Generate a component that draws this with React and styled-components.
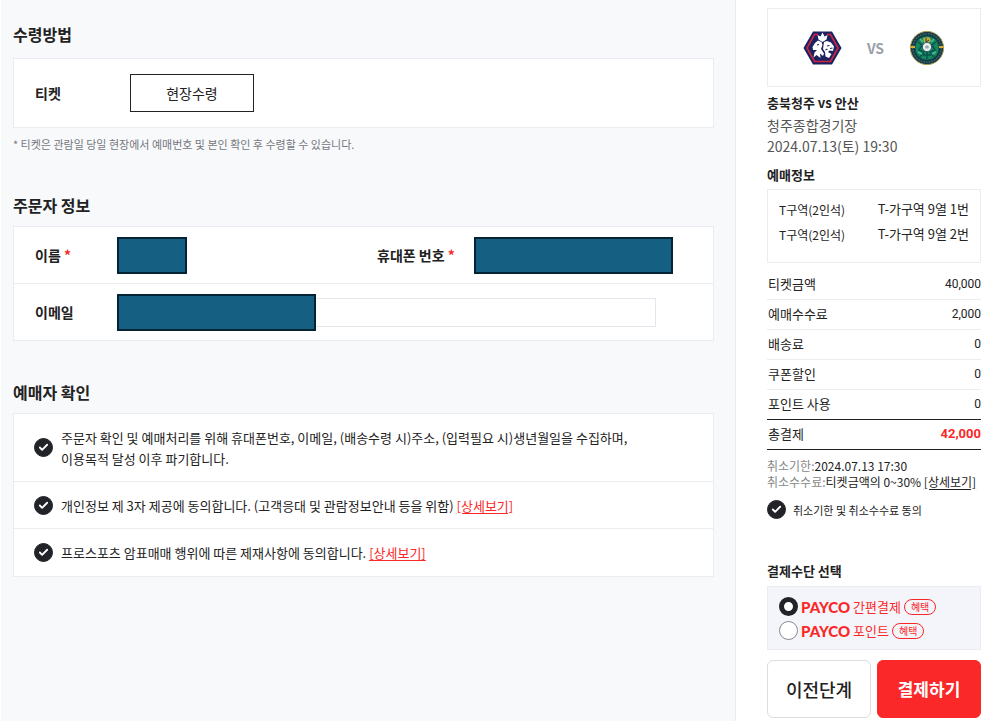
import React, {useState} from "react";
import styled, {createGlobalStyle} from "styled-components";
import {Check} from "lucide-react";

const GlobalStyle = createGlobalStyle`
    * {
        box-sizing: border-box;
    }
    body {
        margin: 0;
        background: #fff;
        color: #222;
        font-family: "Noto Sans CJK KR", "Noto Sans", sans-serif;
        font-size: 13px;
        line-height: 20px;
    }
    button, input {
        font-family: inherit;
    }
`

const Page = styled.div`
    display: flex;
    min-height: 100vh;
`

const Main = styled.main`
    flex: 1;
    min-width: 0;
    margin-left: 1px;
    padding: 24px 21px 0 12px;
    background: #f8f9fb;
`

const Section = styled.section`
    margin-bottom: 41px;
`

const Title = styled.h2`
    margin: 0 0 ${props => props.gap || 11}px;
    font-size: 16px;
    line-height: 20px;
    font-weight: 700;
`

const Card = styled.div`
    background: #fff;
    border: 1px solid #ebecf1;
`

const Row = styled.div`
    display: flex;
    align-items: center;
    height: ${props => props.height}px;
    padding-left: 21px;
    border-top: ${props => props.divided ? "1px solid #ebecf1" : "0"};
`

const Label = styled.label`
    width: ${props => props.width}px;
    font-size: 14px;
    font-weight: 700;
`

const Required = styled.span`
    color: #fa2828;
`

const Method = styled.button`
    width: 124px;
    height: 38px;
    padding: 0;
    background: #fff;
    border: 1px solid #222;
    color: #222;
    font-size: 14px;
`

const Note = styled.p`
    margin: 6px 0 0;
    color: #74777c;
    font-size: 11px;
`

const Half = styled.div`
    display: flex;
    align-items: center;
    flex: ${props => props.grow ? "1" : "0 0 342px"};
`

const Filled = styled.input`
    width: ${props => props.width}px;
    height: 37px;
    padding: 0 8px;
    background: #156082;
    border: 2px solid #042433;
    color: #fff;
`

const MailRest = styled.input`
    flex: 1;
    min-width: 0;
    height: 29px;
    margin-right: 57px;
    border: 1px solid #e5e6ec;
    border-left: 0;
    background: #fff;
`

const Agree = styled.div`
    display: flex;
    align-items: center;
    gap: 8px;
    min-height: ${props => props.height}px;
    padding-left: 20px;
    border-top: ${props => props.divided ? "1px solid #ebecf1" : "0"};
    line-height: 21px;
`

const More = styled.a`
    color: ${props => props.red ? "#fa2828" : "#222"};
    text-decoration: underline;
    text-underline-offset: 2px;
`

const Tick = styled.span`
    display: inline-grid;
    flex: none;
    place-items: center;
    width: 19px;
    height: 19px;

    input, svg {
        grid-area: 1 / 1;
    }
    input {
        appearance: none;
        width: 19px;
        height: 19px;
        margin: 0;
        border: 1px solid #222328;
        border-radius: 50%;
        background: #fff;
    }
    input:checked {
        background: #222328;
    }
    svg {
        color: #fff;
        pointer-events: none;
    }
`

const Side = styled.aside`
    flex: 0 0 255px;
    padding: 8px 9px 2px 31px;
    border-left: 1px solid #ebecf1;
`

const Match = styled.div`
    display: flex;
    align-items: center;
    justify-content: center;
    gap: 25px;
    height: 79px;
    border: 1px solid #ebecf1;
`

const Versus = styled.span`
    color: #9a9fa8;
    font-size: 14px;
    font-weight: 700;
`

const SideTitle = styled.h3`
    margin: ${props => props.top}px 0 ${props => props.gap}px;
    font-size: 13px;
    line-height: 20px;
    font-weight: 700;
`

const Place = styled.p`
    margin: 0;
    color: #555;
    font-size: 14px;
    line-height: 21px;
`

const Seats = styled.ul`
    height: 74px;
    margin: 0;
    padding: 7px 11px;
    list-style: none;
    border: 1px solid #ebecf1;
`

const Seat = styled.li`
    display: flex;
    justify-content: space-between;
    font-size: 12px;
    line-height: 25px;

    strong {
        font-size: 13px;
        line-height: 23px;
        font-weight: 400;
    }
`

const Prices = styled.table`
    width: 100%;
    margin-top: 6px;
    border-collapse: collapse;

    th, td {
        height: 30px;
        padding: 0;
        border-bottom: 1px solid #ebecf1;
        line-height: 20px;
    }
    th {
        padding-left: 1px;
        font-weight: 400;
        text-align: left;
    }
    td {
        font-family: Roboto, sans-serif;
        font-size: 12px;
        text-align: right;
    }
    tbody tr:last-child th, tbody tr:last-child td,
    tfoot th, tfoot td {
        border-bottom: 1px solid #222;
    }
    tfoot td {
        color: #fa2828;
        font-size: 13px;
        font-weight: 700;
    }
`

const Terms = styled.dl`
    margin: 8px 0 10px;
    font-size: 12px;
    line-height: 16px;

    div {
        display: flex;
        white-space: nowrap;
    }
    dt {
        color: #888;
    }
    dd {
        margin: 0;
    }
`

const SideAgree = styled.div`
    display: flex;
    align-items: center;
    gap: 7px;
    height: 20px;
    font-size: 11px;
`

const Payments = styled.div`
    padding: 8px 11px 6px;
    background: #f4f5fa;
    border: 1px solid #ebecf1;
`

const Payment = styled.label`
    display: flex;
    align-items: center;
    height: 24px;
    color: #fa2828;

    input {
        appearance: none;
        width: 19px;
        height: 19px;
        margin: 0 3px 0 0;
        border: 1px solid #85878c;
        border-radius: 50%;
        background: #fff;
    }
    input:checked {
        border: 5px solid #222328;
    }
`

const Payco = styled.b`
    margin-right: 3px;
    font-family: Lato, sans-serif;
    font-size: 15px;
    font-weight: 900;
`

const Benefit = styled.span`
    margin-left: 3px;
    padding: 0 6px;
    border: 1px solid #fa2828;
    border-radius: 8px;
    font-size: 10px;
    line-height: 14px;
`

const Actions = styled.div`
    display: grid;
    grid-template-columns: 1fr 1fr;
    gap: 6px;
    margin-top: 10px;
`

const Action = styled.button`
    height: 58px;
    padding: 0;
    border: 1px solid ${props => props.primary ? "#fa2828" : "#dcdde2"};
    border-radius: 6px;
    background: ${props => props.primary ? "#fa2828" : "#fff"};
    color: ${props => props.primary ? "#fff" : "#222"};
    font-size: ${props => props.primary ? 17 : 18}px;
    font-weight: ${props => props.primary ? 700 : 500};
`

const CheongjuLogo = () => (
    <svg width="39" height="34" viewBox="0 0 39 34" role="img" aria-label="충북청주">
        <path d="M10 0.5H29L38.5 17L29 33.5H10L0.5 17Z" fill="#1c2260" />
        <path d="M15 3.5H11.5L4 17L11.5 30.5H27.5L35 17L27.5 3.5H24" fill="none" stroke="#cf2640" strokeWidth="1.6" />
        <path d="M19.5 1.5L21.5 5.5L24.5 4L23.5 8.5L19.5 11L15.5 8.5L14.5 4L17.5 5.5Z" fill="#fff" />
        <path d="M9.5 16L12 12L15 9.5L18.5 11L19.5 14L18 18L21 22.5L20 25L17 22.5L17.5 27L13.5 24L10.5 26.5L11.5 21.5L14 19L10 19Z" fill="#fff" />
        <path d="M21 11L24 10L28 11.5L31 15.5L30 20L26.5 19.5L25 21L28.5 23L26 27L22.5 25.5L22 21L20 18Z" fill="#fff" />
        <path d="M14 14L16 13.5M24 15L26.5 14.5M27 17.5L29.5 17M22.5 19L24.5 18" fill="none" stroke="#1c2260" strokeWidth="1.2" />
    </svg>
)

const AnsanLogo = () => (
    <svg width="36" height="36" viewBox="0 0 36 36" role="img" aria-label="안산">
        <circle cx="18" cy="18" r="16.6" fill="#123948" stroke="#a99b4c" strokeWidth="1" />
        <circle cx="18" cy="18" r="14.2" fill="none" stroke="#476668" strokeWidth="1.5" strokeDasharray="1.5 1.2" />
        <circle cx="18" cy="18" r="12" fill="#13885e" stroke="#194b48" strokeWidth="0.8" />
        <path d="M1.5 17H6M30 17H34.5" stroke="#d6ae36" strokeWidth="2" />
        <path d="M9 12L13 15L10 20L15 22L11 27M27 12L23 15L26 20L21 22L25 27M18 22V29M14 25H22" fill="none" stroke="#0a524d" strokeWidth="1.5" />
        <path d="M11 9L14 12M25 9L22 12M9 22L13 24M27 22L23 24" stroke="#48c194" strokeWidth="1.5" />
        <path d="M14 8L20 7L22 10L20 13H15Z" fill="#c5a93c" />
        <path d="M17 8V12L20 10" fill="none" stroke="#164640" strokeWidth="1" />
        <circle cx="18" cy="17" r="4.6" fill="#e9eef0" stroke="#204951" strokeWidth="0.8" />
        <path d="M18 15L20 16.5L19.5 18.5H16.5L16 16.5Z" fill="#9aabb2" />
    </svg>
)

const CheckCircle = ({id}) => {
    const [checked, setChecked] = useState(true);

    return (
        <Tick>
            <input type="checkbox" id={id} checked={checked} onChange={() => setChecked(!checked)} />
            <Check size={11} strokeWidth={4} />
        </Tick>
    )
}

const prices = [
    {name: "티켓금액", value: "40,000"},
    {name: "예매수수료", value: "2,000"},
    {name: "배송료", value: "0"},
    {name: "쿠폰할인", value: "0"},
    {name: "포인트 사용", value: "0"},
]

const payments = ["간편결제", "포인트"]
const seats = ["T-가구역 9열 1번", "T-가구역 9열 2번"]

const App = () => {
    const [payment, setPayment] = useState("간편결제");

    return (
        <Page>
            <GlobalStyle />
            <Main>
                <Section>
                    <Title gap={14}>수령방법</Title>
                    <Card>
                        <Row height={68}>
                            <Label as="span" width={95}>티켓</Label>
                            <Method type="button">현장수령</Method>
                        </Row>
                    </Card>
                    <Note>* 티켓은 관람일 당일 현장에서 예매번호 및 본인 확인 후 수령할 수 있습니다.</Note>
                </Section>
                <Section>
                    <Title>주문자 정보</Title>
                    <Card>
                        <Row height={56}>
                            <Half>
                                <Label htmlFor="name" width={82}>이름 <Required>*</Required></Label>
                                <Filled id="name" width={70} />
                            </Half>
                            <Half grow>
                                <Label htmlFor="phone" width={97}>휴대폰 번호 <Required>*</Required></Label>
                                <Filled id="phone" width={199} />
                            </Half>
                        </Row>
                        <Row height={57} divided>
                            <Label htmlFor="mail" width={82}>이메일</Label>
                            <Filled id="mail" width={199} />
                            <MailRest aria-label="이메일" />
                        </Row>
                    </Card>
                </Section>
                <Section>
                    <Title>예매자 확인</Title>
                    <Card>
                        <Agree height={67}>
                            <CheckCircle id="collect" />
                            <label htmlFor="collect">
                                주문자 확인 및 예매처리를 위해 휴대폰번호, 이메일, (배송수령 시)주소, (입력필요 시)생년월일을 수집하며,<br />
                                이용목적 달성 이후 파기합니다.
                            </label>
                        </Agree>
                        <Agree height={47} divided>
                            <CheckCircle id="third" />
                            <span>
                                <label htmlFor="third">개인정보 제 3자 제공에 동의합니다. (고객응대 및 관람정보안내 등을 위함)</label>{" "}
                                <More href="#third" red>[상세보기]</More>
                            </span>
                        </Agree>
                        <Agree height={48} divided>
                            <CheckCircle id="resale" />
                            <span>
                                <label htmlFor="resale">프로스포츠 암표매매 행위에 따른 제재사항에 동의합니다.</label>{" "}
                                <More href="#resale" red>[상세보기]</More>
                            </span>
                        </Agree>
                    </Card>
                </Section>
            </Main>
            <Side>
                <Match>
                    <CheongjuLogo />
                    <Versus>VS</Versus>
                    <AnsanLogo />
                </Match>
                <SideTitle top={6} gap={2}>충북청주 vs 안산</SideTitle>
                <Place>청주종합경기장</Place>
                <Place>2024.07.13(토) 19:30</Place>
                <SideTitle top={8} gap={4}>예매정보</SideTitle>
                <Seats>
                    {seats.map(seat => (
                        <Seat key={seat}>
                            <span>T구역(2인석)</span>
                            <strong>{seat}</strong>
                        </Seat>
                    ))}
                </Seats>
                <Prices>
                    <tbody>
                        {prices.map(price => (
                            <tr key={price.name}>
                                <th scope="row">{price.name}</th>
                                <td>{price.value}</td>
                            </tr>
                        ))}
                    </tbody>
                    <tfoot>
                        <tr>
                            <th scope="row">총결제</th>
                            <td>42,000</td>
                        </tr>
                    </tfoot>
                </Prices>
                <Terms>
                    <div>
                        <dt>취소기한:</dt>
                        <dd>2024.07.13 17:30</dd>
                    </div>
                    <div>
                        <dt>취소수수료:</dt>
                        <dd>티켓금액의 0~30% <More href="#fee">[상세보기]</More></dd>
                    </div>
                </Terms>
                <SideAgree>
                    <CheckCircle id="cancel" />
                    <label htmlFor="cancel">취소기한 및 취소수수료 동의</label>
                </SideAgree>
                <SideTitle top={41} gap={5}>결제수단 선택</SideTitle>
                <Payments>
                    {payments.map(name => (
                        <Payment key={name}>
                            <input
                                type="radio"
                                name="payment"
                                checked={payment === name}
                                onChange={() => setPayment(name)}
                            />
                            <Payco>PAYCO</Payco>
                            {name}
                            <Benefit>혜택</Benefit>
                        </Payment>
                    ))}
                </Payments>
                <Actions>
                    <Action type="button">이전단계</Action>
                    <Action type="button" primary>결제하기</Action>
                </Actions>
            </Side>
        </Page>
    )
}

export default App;
